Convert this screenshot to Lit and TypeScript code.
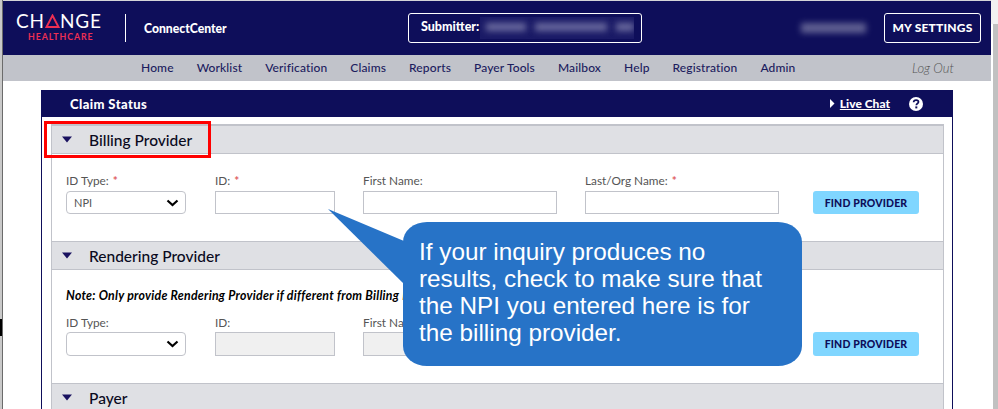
import { LitElement, html, css, svg } from "lit";
import { customElement } from "lit/decorators.js";

const FONT = css`Lato, "Open Sans", sans-serif`;

@customElement("app-root")
export class AppRoot extends LitElement {
  static styles = css`
    :host { display: block; width: 998px; height: 409px; overflow: hidden; position: relative; background: #fff; font-family: ${FONT}; }
    * { box-sizing: border-box; }
    .frame { display: flex; height: 409px; }
    .strip-l { width: 3px; flex: none; background: #c9c9c9; border-right: 1px solid #6b6b6b; display: flex; flex-direction: column; padding-top: 319px; }
    .strip-l i { display: block; width: 2px; height: 17px; background: #000; }
    .main { width: 988px; flex: none; }
    .strip-r { width: 7px; flex: none; display: flex; flex-direction: column; align-items: flex-end; }
    .strip-r .cap { width: 7px; height: 24px; background: #f1f1f1; }
    .strip-r .thumb { width: 5px; flex: 1; background: #c1c1c1; }
    .top { height: 55px; background: #0e0e5a; border-top: 1px solid #d4d4d8; display: flex; align-items: center; color: #fff; position: relative; }
    .logo { width: 122px; padding: 0 0 3px 13px; flex: none; display: flex; flex-direction: column; align-items: flex-start; }
    .logo .word { display: flex; align-items: center; font-size: 19px; line-height: 18px; letter-spacing: 0.7px; height: 18px; font-weight: 400; }
    .logo .word svg { margin: 0 0.5px 0 0; }
    .logo .hc { color: #ee2f53; font-size: 8.8px; line-height: 10px; font-weight: 700; letter-spacing: 0.9px; margin: 2px 0 0 12px; }
    .divider { width: 1px; height: 28px; background: #fff; flex: none; }
    .app { margin-left: 18px; width: 264px; flex: none; font-size: 12.2px; font-weight: 900; }
    .sub { width: 234px; height: 30px; flex: none; border: 1px solid #fff; border-radius: 3px; display: flex; align-items: center; padding: 0 0 0 12px; font-size: 12.5px; font-weight: 900; }
    .sub > span.label { padding-bottom: 3px; }
    .mask { display: flex; align-items: center; gap: 9px; width: 154px; height: 22px; margin-left: 1px; padding: 0 0 2px 6px; background: #1a1a66; overflow: hidden; }
    .blob { display: block; height: 8px; background: #6a6a9e; filter: blur(3px); }
    .name { display: block; width: 65px; height: 10px; margin-left: 159px; flex: none; background: #6f6f9c; filter: blur(3px); opacity: .85; }
    .btn-set { margin-left: 18px; width: 97px; height: 30px; border: 1px solid #fff; border-radius: 3px; flex: none; font-size: 12px; font-weight: 900; letter-spacing: 0.2px; display: flex; align-items: center; justify-content: center; padding-bottom: 2px; }
    nav { height: 26px; background: #c1c3ca; display: flex; align-items: center; gap: 23px; padding: 0 37px 1px 138px; font-size: 12px; font-weight: 500; letter-spacing: 0.13px; color: #1c1c5e; }
    nav .out { margin-left: auto; font-size: 13px; font-weight: 300; font-style: italic; color: #555; letter-spacing: 0; }
    .card { margin: 9px 0 0 38px; width: 912px; border-left: 1px solid #0e0e5a; border-right: 1px solid #0e0e5a; padding: 0 8px 0 9px; }
    .title { margin: 0 -8px 7px -10px; width: 912px; height: 27px; background: #0e0e5a; color: #fff; display: flex; align-items: center; padding-left: 29px; font-size: 13px; letter-spacing: 0.4px; font-weight: 900; }
    .chat { margin-left: auto; display: flex; align-items: center; }
    .chat svg { margin-right: 5px; }
    .chat u { font-size: 12px; letter-spacing: 0; font-weight: 900; }
    .q { margin: 0 30px 0 19px; }
    .sec { border-left: 1px solid #c1c3ca; border-right: 1px solid #c1c3ca; }
    .head { height: 29px; background: #dfe0e4; border-top: 1px solid #c1c3ca; border-bottom: 1px solid #c1c3ca; display: flex; align-items: center; padding-left: 10px; font-size: 15.5px; font-weight: 500; color: #0a0a1e; }
    .head svg { margin-right: 17px; }
    .head.first { height: 30px; border-top-width: 2px; }
    .body { padding: 20px 0 0 14px; height: 87px; }
    .body.two { height: 113px; padding-top: 19px; }
    .note { font-size: 12.3px; letter-spacing: 0.25px; font-weight: 700; font-style: italic; color: #000; height: 13px; line-height: 13px; margin-bottom: 14px; white-space: nowrap; }
    .fields { display: grid; grid-template-columns: 121px 120px 194px 194px 112px; column-gap: 28px; align-items: end; }
    .fields > :nth-child(1) { margin-right: 1px; }
    .fields > :nth-child(5) { margin-left: 6px; }
    label { display: block; font-size: 11.8px; line-height: 14px; min-height: 14px; margin-bottom: 3px; color: #555; font-weight: 400; }
    .two label { margin-bottom: 2px; }
    label b { color: #e0605f; font-weight: 700; margin-left: 1px; }
    .select, .input { height: 23px; border: 1px solid #c1c3ca; background: #fff; display: flex; align-items: center; }
    .two .select, .two .input { height: 24px; }
    .select { border-radius: 4px; padding: 0 6px 0 7px; font-size: 11px; color: #555; justify-content: space-between; }
    .select svg { margin-left: auto; }
    .input.off { background: #f0f0f0; }
    .find { height: 23px; border-radius: 3px; background: #80d6ff; color: #0e0e5a; font-size: 10.5px; font-weight: 900; letter-spacing: 0.15px; display: flex; align-items: center; justify-content: center; }
    .two .find { height: 24px; }
    .redbox { position: absolute; left: 44px; top: 121px; width: 167px; height: 37px; border: 3px solid #f00; }
    .tail { position: absolute; left: 328px; top: 209px; }
    .callout { position: absolute; left: 403px; top: 222px; width: 399px; height: 144px; background: #2773c7; border-radius: 24px / 20px; color: #fff; font-family: "Liberation Sans", Arial, sans-serif; font-size: 24.3px; line-height: 27px; padding: 16px 32px 17px 16px; }
  `;

  private tri() {
    return html`<svg width="10" height="7" viewBox="0 0 10 7"><path d="M0 0.5H10L5 6.5Z" fill="#1a1260"/></svg>`;
  }
  private chev() {
    return html`<svg width="13" height="8" viewBox="0 0 13 8"><path d="M1.5 1.5L6.5 6L11.5 1.5" fill="none" stroke="#000" stroke-width="2.2"/></svg>`;
  }

  render() {
    const links = ["Home", "Worklist", "Verification", "Claims", "Reports", "Payer Tools", "Mailbox", "Help", "Registration", "Admin"];
    return html`
      <div class="frame">
        <div class="strip-l"><i></i></div>
        <div class="main">
          <div class="top">
            <div class="logo">
              <div class="word">CH<svg width="15" height="14" viewBox="0 0 15 14">${svg`<path d="M7.5 1.5L13.5 13H1.5Z" fill="none" stroke="#ee2f53" stroke-width="1.9"/>`}</svg>NGE</div>
              <div class="hc">HEALTHCARE</div>
            </div>
            <div class="divider"></div>
            <div class="app">ConnectCenter</div>
            <div class="sub"><span class="label">Submitter:</span><span class="mask"><span class="blob" style="width:40px"></span><span class="blob" style="width:72px"></span><span class="blob" style="width:18px"></span></span></div>
            <span class="name"></span>
            <div class="btn-set">MY SETTINGS</div>
          </div>
          <nav>
            ${links.map((l) => html`<span>${l}</span>`)}
            <span class="out">Log Out</span>
          </nav>
          <div class="card">
            <div class="title">
              <span>Claim Status</span>
              <span class="chat">
                <svg width="5" height="9" viewBox="0 0 5 9"><path d="M0 0L4.5 4.5L0 9Z" fill="#fff"/></svg>
                <u>Live Chat</u>
              </span>
              <svg class="q" width="14" height="14" viewBox="0 0 14 14">
                <circle cx="7" cy="7" r="7" fill="#fff"/>
                <path d="M4.6 5.3C4.7 3.8 5.8 3.1 7.1 3.1C8.5 3.1 9.5 3.9 9.5 5.1C9.5 6.5 7.3 6.6 7.3 8.3" fill="none" stroke="#0e0e5a" stroke-width="1.7"/>
                <rect x="6.3" y="9.4" width="2" height="2" fill="#0e0e5a"/>
              </svg>
            </div>
            <div class="sec">
              <div class="head first">${this.tri()}Billing Provider</div>
              <div class="body">
                <div class="fields">
                  <div><label>ID Type: <b>*</b></label><div class="select">NPI${this.chev()}</div></div>
                  <div><label>ID: <b>*</b></label><div class="input"></div></div>
                  <div><label>First Name:</label><div class="input"></div></div>
                  <div><label>Last/Org Name: <b>*</b></label><div class="input"></div></div>
                  <div class="find">FIND PROVIDER</div>
                </div>
              </div>
              <div class="head">${this.tri()}Rendering Provider</div>
              <div class="body two">
                <div class="note">Note: Only provide Rendering Provider if different from Billing Provider.</div>
                <div class="fields">
                  <div><label>ID Type:</label><div class="select">${this.chev()}</div></div>
                  <div><label>ID:</label><div class="input off"></div></div>
                  <div><label>First Name:</label><div class="input off"></div></div>
                  <div><label></label><div class="input off"></div></div>
                  <div class="find">FIND PROVIDER</div>
                </div>
              </div>
              <div class="head">${this.tri()}Payer</div>
            </div>
          </div>
        </div>
        <div class="strip-r"><div class="cap"></div><div class="thumb"></div></div>
      </div>
      <div class="redbox"></div>
      <svg class="tail" width="76" height="76" viewBox="0 0 76 76"><path d="M0 0L76 32V75Z" fill="#2773c7"/></svg>
      <div class="callout">If your inquiry produces no results, check to make sure that the NPI you entered here is for the billing provider.</div>
    `;
  }
}
